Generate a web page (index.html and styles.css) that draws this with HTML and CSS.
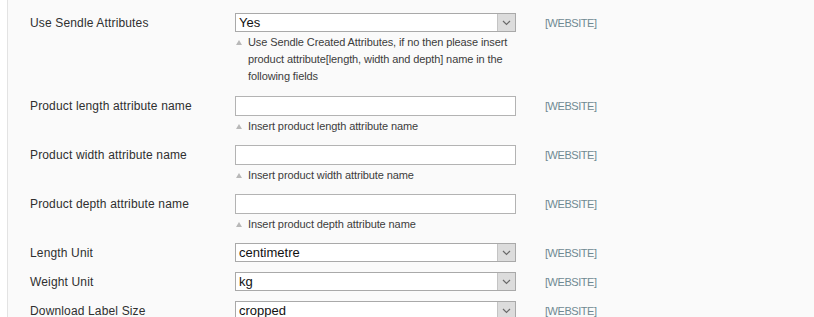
FILE: index.html
```html
<!DOCTYPE html>
<html>
<head>
<meta charset="utf-8">
<link rel="stylesheet" href="styles.css">
</head>
<body>
<div class="page">
  <div class="form-list">
    <div class="row">
      <div class="label">Use Sendle Attributes</div>
      <div class="value">
        <div class="select"><span class="sel-text">Yes</span><span class="sel-btn"><svg width="9" height="6" viewBox="0 0 9 6"><path d="M1 1 L4.5 4.5 L8 1" fill="none" stroke="#6a6a6a" stroke-width="1.2"/></svg></span></div>
        <p class="note note-multi"><span class="tri"></span>Use Sendle Created Attributes, if no then please insert product attribute[length, width and depth] name in the following fields</p>
      </div>
      <div class="scope">[WEBSITE]</div>
    </div>
    <div class="row">
      <div class="label">Product length attribute name</div>
      <div class="value">
        <div class="input"></div>
        <p class="note"><span class="tri"></span>Insert product length attribute name</p>
      </div>
      <div class="scope">[WEBSITE]</div>
    </div>
    <div class="row">
      <div class="label">Product width attribute name</div>
      <div class="value">
        <div class="input"></div>
        <p class="note"><span class="tri"></span>Insert product width attribute name</p>
      </div>
      <div class="scope">[WEBSITE]</div>
    </div>
    <div class="row">
      <div class="label">Product depth attribute name</div>
      <div class="value">
        <div class="input"></div>
        <p class="note"><span class="tri"></span>Insert product depth attribute name</p>
      </div>
      <div class="scope">[WEBSITE]</div>
    </div>
    <div class="row">
      <div class="label">Length Unit</div>
      <div class="value">
        <div class="select"><span class="sel-text">centimetre</span><span class="sel-btn"><svg width="9" height="6" viewBox="0 0 9 6"><path d="M1 1 L4.5 4.5 L8 1" fill="none" stroke="#6a6a6a" stroke-width="1.2"/></svg></span></div>
      </div>
      <div class="scope">[WEBSITE]</div>
    </div>
    <div class="row">
      <div class="label">Weight Unit</div>
      <div class="value">
        <div class="select"><span class="sel-text">kg</span><span class="sel-btn"><svg width="9" height="6" viewBox="0 0 9 6"><path d="M1 1 L4.5 4.5 L8 1" fill="none" stroke="#6a6a6a" stroke-width="1.2"/></svg></span></div>
      </div>
      <div class="scope">[WEBSITE]</div>
    </div>
    <div class="row">
      <div class="label">Download Label Size</div>
      <div class="value">
        <div class="select"><span class="sel-text">cropped</span><span class="sel-btn"><svg width="9" height="6" viewBox="0 0 9 6"><path d="M1 1 L4.5 4.5 L8 1" fill="none" stroke="#6a6a6a" stroke-width="1.2"/></svg></span></div>
      </div>
      <div class="scope">[WEBSITE]</div>
    </div>
  </div>
</div>
</body>
</html>
```

FILE: styles.css
```css
html, body {
  margin: 0;
  padding: 0;
  background: #ffffff;
  height: 100%;
  overflow: hidden;
}
body {
  font-family: "Liberation Sans", Arial, sans-serif;
  font-size: 12px;
  color: #2f2f2f;
}
.page {
  margin-left: 7px;
  border-left: 1px solid #e3e3e3;
  background: #fafafa;
  min-height: 100%;
  padding-top: 8px;
}
.form-list {
  display: flex;
  flex-direction: column;
}
.row {
  display: flex;
  align-items: flex-start;
  padding: 5px 0 5px 0;
}
.label {
  width: 205px;
  padding-left: 22px;
  padding-top: 3px;
  line-height: 15px;
  letter-spacing: 0.15px;
  flex-shrink: 0;
}
.value {
  width: 281px;
  flex-shrink: 0;
}
.select, .input {
  box-sizing: border-box;
  width: 281px;
  height: 19px;
  border: 1px solid #a9a9a9;
  background: #fff;
  display: flex;
  align-items: center;
}
.input {
  height: 20px;
  border-color: #b3b3b3;
}
.sel-text {
  flex: 1;
  padding-left: 3px;
  font-size: 13px;
  color: #111;
  line-height: 17px;
}
.sel-btn {
  width: 17px;
  height: 17px;
  background: #dcdcdc;
  border-left: 1px solid #c4c4c4;
  display: flex;
  align-items: center;
  justify-content: center;
}
.note {
  margin: 2px 0 0 0;
  padding-left: 13px;
  font-size: 11px;
  line-height: 17px;
  letter-spacing: -0.1px;
  color: #3c3c3c;
  position: relative;
}
.note-multi {
  padding-bottom: 1px;
}
.tri {
  position: absolute;
  left: 1px;
  top: 6px;
  width: 0;
  height: 0;
  border-left: 3px solid transparent;
  border-right: 3px solid transparent;
  border-bottom: 5px solid #b8b8b8;
}
.scope {
  padding-left: 29px;
  padding-top: 3px;
  font-size: 11px;
  line-height: 14px;
  letter-spacing: -0.45px;
  color: #6f8992;
}
```
